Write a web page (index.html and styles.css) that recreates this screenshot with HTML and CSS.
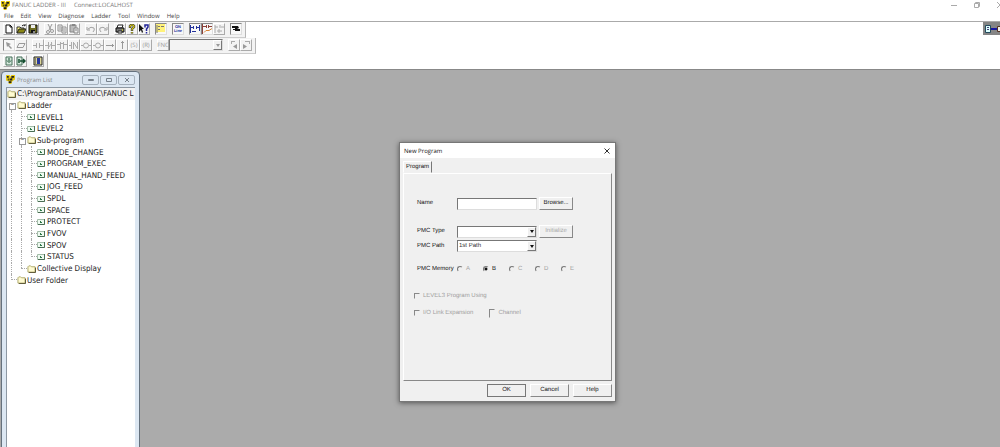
FILE: index.html
```html
<!DOCTYPE html>
<html lang="en">
<head>
<meta charset="utf-8">
<title>FANUC LADDER - III</title>
<link rel="stylesheet" href="styles.css">
</head>
<body>
<svg class="defs" aria-hidden="true">
  <symbol id="logo" viewBox="0 0 10 10"><path d="M0 0h4l1 2 1-2h4v5L7 7 6 10H3V7L0 6z" fill="#e8c80c"/><path d="M1 1h2v2H1zM6 1h3v2H7v3H4V4h2zM3 7h3v2H3zM2 4h1v2H2z" fill="#222"/></symbol>
  <symbol id="folder" viewBox="0 0 10 9"><path d="M1 8V2l1-1h2l1 1h4v6z" fill="#fffbd2" stroke="#a8a260"/><path d="M9.500 3v5.500H2" fill="none" stroke="#4f4b28"/></symbol>
  <symbol id="ladder" viewBox="0 0 9 8"><path d="M.5 1.500h7v5h-7z" fill="#eefaf0" stroke="#a3bda9"/><path d="M3.500 3v2M3 4.500h2" stroke="#2f7849" fill="none"/><path d="M7.500 1v5.500H1" fill="none" stroke="#4b6e55"/></symbol>
  <symbol id="new" viewBox="0 0 10 10"><path d="M2 1h4l2 2v6H2zM6 1v2h2" fill="#fff" stroke="#111"/></symbol>
  <symbol id="open" viewBox="0 0 10 10"><path d="M1 9V3h3l1 1h3v2" fill="#fff780" stroke="#333"/><path d="M1 9l2-4h7L8 9z" fill="#8a8715" stroke="#222"/><path d="M6 2q1-2 3 0V0" fill="none" stroke="#222"/></symbol>
  <symbol id="save" viewBox="0 0 10 10"><path d="M1 1h8v8H1z" fill="#6d6b20" stroke="#111"/><path d="M3 1h4v3H3z" fill="#eee"/><path d="M3 6h4v3H3z" fill="#111"/><path d="M6 7v2" stroke="#fff"/></symbol>
  <symbol id="cut" viewBox="0 0 10 10"><path d="M3 0l3 6M7 0L4 6" fill="none" stroke="#999"/><circle cx="3" cy="8" r="1.500" fill="none" stroke="#999"/><circle cx="7" cy="7" r="1.500" fill="none" stroke="#999"/></symbol>
  <symbol id="copy" viewBox="0 0 10 10"><path d="M1 1h4v6H1zM5 3h4v6H5zM2 3h2M2 5h2M6 5h2M6 7h2" fill="none" stroke="#929292"/></symbol>
  <symbol id="paste" viewBox="0 0 10 10"><path d="M1 1h6v7H1z" fill="#bbb" stroke="#888"/><path d="M3 0h3v2H3z" fill="#888"/><path d="M5 4h4v5H5zM6 6h2" fill="#eee" stroke="#888"/></symbol>
  <symbol id="undo" viewBox="0 0 10 10"><path d="M1 3v3h3M2 5q3-3 6-1 1 2-1 4" fill="none" stroke="#a2a2a2"/></symbol>
  <symbol id="redo" viewBox="0 0 10 10"><path d="M9 3v3H6M8 5Q5 2 2 4q-1 2 1 4" fill="none" stroke="#a2a2a2"/></symbol>
  <symbol id="print" viewBox="0 0 10 10"><path d="M3 1h5L7 4H2z" fill="#fff" stroke="#222"/><path d="M1 4h8v4H1z" fill="#777" stroke="#111"/><path d="M3 7h4v2H3z" fill="#eee" stroke="#222"/><path d="M7 6h1" stroke="#ff0"/></symbol>
  <symbol id="help" viewBox="0 0 10 10"><path d="M3 4V2l1-1h2l1 1v1L5 5v2M5 8v1.500" fill="none" stroke="#333" stroke-width="2.400"/><path d="M3 3.500V2l1-1h2l1 1v1L5 5v1.500M5 8v1.200" fill="none" stroke="#d8cc18" stroke-width="1.200"/></symbol>
  <symbol id="what" viewBox="0 0 10 10"><path d="M0 0v8l2-2 1 3 1-1-1-3h2z" fill="#111"/><path d="M6 3.500V1h3v2L7.500 5v2M7.500 8v1.500" fill="none" stroke="#23269b" stroke-width="1.500"/></symbol>
  <symbol id="tree" viewBox="0 0 10 10"><path d="M0 0h9v8H0z" fill="#fff27a"/><path d="M1 1v8M2 2.500h2M5 2.500h3M2 5.500h2" stroke="#777" fill="none"/></symbol>
  <symbol id="net" viewBox="0 0 10 10"><path d="M.5 1v8M9.500 1v6M0 3.500h3M3.500 2v3M6.500 2v3M7 3.500h3M2 7.500h4" fill="none" stroke="#23329a"/></symbol>
  <symbol id="netred" viewBox="0 0 10 10"><path d="M.5 0v10M1 2.500h3M4.500 1v3M6.500 1v3M7 2.500h3" fill="none" stroke="#8d4038"/><path d="M2 8.500l2-2h3l3-2" stroke="#d88435" fill="none"/></symbol>
  <symbol id="netgray" viewBox="0 0 10 10"><path d="M1 1v8M1 3h3M6 1v3M7 3h3M3 7h5M5 5v4" fill="none" stroke="#aaa"/></symbol>
  <symbol id="hand" viewBox="0 0 10 10"><path d="M1 2h6l1 2-2 1h3v2H4V6H2V5h2V4H1z" fill="#111"/></symbol>
  <symbol id="arrow" viewBox="0 0 10 10"><path d="M2 2l5 2-2 1 3 3-1 1-3-3-1 1z" fill="#999"/></symbol>
  <symbol id="erase" viewBox="0 0 10 10"><path d="M1 7.500l2-4h6l-2 4z" fill="none" stroke="#999"/></symbol>
  <symbol id="a" viewBox="0 0 10 10"><path d="M0 5.500h3M3.500 3v5M6.500 3v5M7 5.500h3" fill="none" stroke="#aaa"/></symbol>
  <symbol id="b" viewBox="0 0 10 10"><path d="M0 5.500h3M3.500 2v7M6.500 2v7M7 5.500h3M3 8l4-5" fill="none" stroke="#aaa"/></symbol>
  <symbol id="c" viewBox="0 0 10 10"><path d="M0 4.500h3M3.500 2v7M6.500 2v7M7 4.500h3M4 3.500h2" fill="none" stroke="#aaa"/></symbol>
  <symbol id="d" viewBox="0 0 10 10"><path d="M0 5.500h2M2.500 2v7M4.500 2v7M5 3l3 5M8.500 2v7" fill="none" stroke="#aaa"/></symbol>
  <symbol id="coil" viewBox="0 0 10 10"><path d="M0 5.500h2M8 5.500h2" stroke="#aaa"/><circle cx="5" cy="5.500" r="2.500" fill="none" stroke="#aaa"/></symbol>
  <symbol id="line" viewBox="0 0 10 10"><path d="M1 5.500h8M7.500 4v3" stroke="#999"/></symbol>
  <symbol id="vert" viewBox="0 0 10 10"><path d="M5.500 1v8M4 2.500h3" stroke="#999"/></symbol>
  <symbol id="prev" viewBox="0 0 10 10"><path d="M8 4v5L4 6.500z" fill="#999"/><path d="M2 1.500h4M2.500 1v3" stroke="#aaa"/></symbol>
  <symbol id="next" viewBox="0 0 10 10"><path d="M2 4v5l4-2.500z" fill="#999"/><path d="M4 1.500h5M8.500 1v3" stroke="#aaa"/></symbol>
  <symbol id="import" viewBox="0 0 10 10"><path d="M2 1h6v8H2z" fill="#d5e8dc" stroke="#456e59"/><path d="M5 2v3M3 4.500l2 2 2-2" fill="none" stroke="#134d2e"/></symbol>
  <symbol id="export" viewBox="0 0 10 10"><path d="M1 1h5v8H1z" fill="#d5e8dc" stroke="#456e59"/><path d="M3 3v4M4 5h4M7 3l2 2-2 2" fill="none" stroke="#134d2e" stroke-width="1.500"/></symbol>
  <symbol id="panel" viewBox="0 0 10 10"><path d="M1 1h8v8H1z" fill="#ddd79a" stroke="#222"/><path d="M4 2h3v6H4z" fill="#28389b"/><path d="M2 3h1M2 5h1M2 7h1" stroke="#333"/></symbol>
</svg>
<div class="app">
  <header class="titlebar">
    <svg class="logo"><use href="#logo"/></svg>
    <span>FANUC LADDER - III</span><span>Connect:LOCALHOST</span>
    <div class="window-controls">
      <button aria-label="Minimize"><svg viewBox="0 0 8 8"><path d="M1 4.500h6"/></svg></button>
      <button aria-label="Restore"><svg viewBox="0 0 8 8"><path d="M1.500 2.500h4v4h-4zM2.500 2.500v-1h4v4h-1"/></svg></button>
      <button aria-label="Close"><svg viewBox="0 0 8 8"><path d="M1 1l6 6M7 1L1 7"/></svg></button>
    </div>
  </header>
  <nav class="menu"><button>File</button><button>Edit</button><button>View</button><button>Diagnose</button><button>Ladder</button><button>Tool</button><button>Window</button><button>Help</button></nav>
  <section class="toolbars">
    <div class="bars">
      <div class="bar">
        <div class="group"><button aria-label="New"><svg><use href="#new"/></svg></button><button aria-label="Open"><svg><use href="#open"/></svg></button><button aria-label="Save"><svg><use href="#save"/></svg></button></div>
        <div class="group"><button aria-label="Cut"><svg><use href="#cut"/></svg></button><button aria-label="Copy"><svg><use href="#copy"/></svg></button><button aria-label="Paste"><svg><use href="#paste"/></svg></button></div>
        <div class="group"><button aria-label="Undo"><svg><use href="#undo"/></svg></button><button aria-label="Redo"><svg><use href="#redo"/></svg></button></div>
        <div class="group"><button aria-label="Print"><svg><use href="#print"/></svg></button><button aria-label="About"><svg><use href="#help"/></svg></button><button aria-label="Context help"><svg><use href="#what"/></svg></button></div>
        <div class="group"><button class="pressed" aria-label="Program list"><svg><use href="#tree"/></svg></button></div>
        <div class="group"><button class="pressed online"><span>ON</span><span>Line</span></button></div>
        <div class="group"><button class="pressed" aria-label="Monitor"><svg><use href="#net"/></svg></button><button class="pressed" aria-label="Edit ladder"><svg><use href="#netred"/></svg></button><button aria-label="Online edit"><svg><use href="#netgray"/></svg></button></div>
        <div class="group"><button class="pressed" aria-label="Run or stop"><svg><use href="#hand"/></svg></button></div>
      </div>
      <div class="bar">
        <div class="group"><button class="pressed" aria-label="Select"><svg><use href="#arrow"/></svg></button><button aria-label="Erase"><svg><use href="#erase"/></svg></button></div>
        <div class="group"><button aria-label="Contact A"><svg><use href="#a"/></svg></button><button aria-label="Contact B"><svg><use href="#b"/></svg></button><button aria-label="Positive contact"><svg><use href="#c"/></svg></button><button aria-label="Negative contact"><svg><use href="#d"/></svg></button><button aria-label="Coil"><svg><use href="#coil"/></svg></button><button aria-label="Inverted coil"><svg><use href="#coil"/></svg></button><button aria-label="Horizontal line"><svg><use href="#line"/></svg></button><button aria-label="Vertical line"><svg><use href="#vert"/></svg></button><button>(S)</button><button>(R)</button></div>
        <div class="group"><button class="fnc">FNC</button><span class="combo function"><select aria-label="Function" disabled><option></option></select><i></i></span></div>
        <div class="group"><button aria-label="Previous"><svg><use href="#prev"/></svg></button><button aria-label="Next"><svg><use href="#next"/></svg></button></div>
      </div>
      <div class="bar">
        <div class="group"><button aria-label="Decompile"><svg><use href="#import"/></svg></button><button aria-label="Compile"><svg><use href="#export"/></svg></button></div>
        <div class="group"><button aria-label="Status"><svg><use href="#panel"/></svg></button></div>
      </div>
    </div>
    <svg class="connection" viewBox="0 0 17 13"><path d="M0 0h17v13H0z" fill="#858585"/><path d="M2.500 3.500h5v7h-5z" fill="#dfffff" stroke="#244b5d"/><path d="M4 5.500h2M4 7.500h2" stroke="#447"/><path d="M8 7h6" stroke="#1717a0" stroke-width="2"/><path d="M14.500 4.500h3v5h-3z" fill="#eee" stroke="#532"/></svg>
  </section>
  <main class="workspace">
    <section class="program-list">
      <header><svg class="logo"><use href="#logo"/></svg><h2>Program List</h2><div><button aria-label="Minimize list"><svg viewBox="0 0 8 6"><path d="M1.500 2.500h5v1h-5z"/></svg></button><button aria-label="Maximize list"><svg viewBox="0 0 8 6"><path d="M1.500 1.500h5v3h-5z"/></svg></button><button aria-label="Close list"><svg viewBox="0 0 8 6"><path d="M2 1l4 4M6 1L2 5"/></svg></button></div></header>
      <div class="tree-pane"><ul class="tree">
        <li class="root"><svg><use href="#folder"/></svg><span>C:\ProgramData\FANUC\FANUC L</span></li>
        <li><i class="node first"></i><svg><use href="#folder"/></svg><span>Ladder</span></li>
        <li><i class="rail"></i><i class="branch"></i><svg><use href="#ladder"/></svg><span>LEVEL1</span></li>
        <li><i class="rail"></i><i class="branch"></i><svg><use href="#ladder"/></svg><span>LEVEL2</span></li>
        <li><i class="rail"></i><i class="node"></i><svg><use href="#folder"/></svg><span>Sub-program</span></li>
        <li><i class="rail"></i><i class="rail"></i><i class="branch"></i><svg><use href="#ladder"/></svg><span>MODE_CHANGE</span></li>
        <li><i class="rail"></i><i class="rail"></i><i class="branch"></i><svg><use href="#ladder"/></svg><span>PROGRAM_EXEC</span></li>
        <li><i class="rail"></i><i class="rail"></i><i class="branch"></i><svg><use href="#ladder"/></svg><span>MANUAL_HAND_FEED</span></li>
        <li><i class="rail"></i><i class="rail"></i><i class="branch"></i><svg><use href="#ladder"/></svg><span>JOG_FEED</span></li>
        <li><i class="rail"></i><i class="rail"></i><i class="branch"></i><svg><use href="#ladder"/></svg><span>SPDL</span></li>
        <li><i class="rail"></i><i class="rail"></i><i class="branch"></i><svg><use href="#ladder"/></svg><span>SPACE</span></li>
        <li><i class="rail"></i><i class="rail"></i><i class="branch"></i><svg><use href="#ladder"/></svg><span>PROTECT</span></li>
        <li><i class="rail"></i><i class="rail"></i><i class="branch"></i><svg><use href="#ladder"/></svg><span>FVOV</span></li>
        <li><i class="rail"></i><i class="rail"></i><i class="branch"></i><svg><use href="#ladder"/></svg><span>SPOV</span></li>
        <li><i class="rail"></i><i class="rail"></i><i class="branch last"></i><svg><use href="#ladder"/></svg><span>STATUS</span></li>
        <li><i class="rail"></i><i class="branch last"></i><svg><use href="#folder"/></svg><span>Collective Display</span></li>
        <li><i class="branch last"></i><svg><use href="#folder"/></svg><span>User Folder</span></li>
      </ul></div>
    </section>
    <form class="dialog" role="dialog" aria-labelledby="dialog-title">
      <header><h1 id="dialog-title">New Program</h1><button type="button" aria-label="Close"><svg viewBox="0 0 8 8"><path d="M1.500 1.500l5 5M6.500 1.500l-5 5"/></svg></button></header>
      <div class="dialog-body">
        <button class="tab" type="button" role="tab">Program</button>
        <div class="panel">
          <div class="row name"><label for="name">Name</label><input id="name" type="text"><button type="button" class="push">Browse...</button></div>
          <div class="row type"><label for="type">PMC Type</label><span class="combo"><select id="type"><option></option></select><i></i></span><button type="button" class="push" disabled>Initialize</button></div>
          <div class="row path"><label for="path">PMC Path</label><span class="combo"><select id="path"><option>1st Path</option></select><i></i></span></div>
          <div class="row memory"><span>PMC Memory</span><div class="radios"><label class="off"><input type="radio" name="memory" disabled>A</label><label><input type="radio" name="memory" checked>B</label><label class="off"><input type="radio" name="memory" disabled>C</label><label class="off"><input type="radio" name="memory" disabled>D</label><label class="off"><input type="radio" name="memory" disabled>E</label></div></div>
          <div class="checks"><label class="off"><input type="checkbox" disabled>LEVEL3 Program Using</label></div>
          <div class="checks"><label class="off"><input type="checkbox" disabled>I/O Link Expansion</label><label class="off channel"><input type="checkbox" disabled>Channel</label></div>
        </div>
        <footer><button type="button" class="push default">OK</button><button type="button" class="push">Cancel</button><button type="button" class="push">Help</button></footer>
      </div>
    </form>
  </main>
</div>
</body>
</html>
```
FILE: styles.css
```css
* { box-sizing: border-box; }
body { margin: 0; background: #fff; color: #333; font: 6px/10px "Open Sans", "Noto Sans", sans-serif; text-rendering: geometricPrecision; }
button, input, select { margin: 0; padding: 0; border: 0; border-radius: 0; background: none; color: inherit; font: inherit; text-rendering: inherit; }
h1, h2 { margin: 0; font: inherit; }
svg { display: block; flex: none; overflow: hidden; }
.defs { position: absolute; width: 0; height: 0; }
.app { display: flex; flex-direction: column; height: 100vh; overflow: hidden; }
.logo { width: 9px; height: 9px; }

.titlebar { display: flex; align-items: center; gap: 8px; height: 10px; padding-left: 1px; color: #777; overflow: hidden; }
.titlebar .logo { margin-right: -6px; }
.window-controls { display: flex; gap: 15px; margin-left: auto; margin-right: -4px; }
.window-controls svg { width: 8px; height: 8px; fill: none; stroke: #aaa; }
.menu { display: flex; gap: 7px; height: 12px; padding-left: 4px; border-bottom: 1px solid #aaa; color: #444; }

.toolbars { display: flex; justify-content: space-between; align-items: flex-start; height: 47px; }
.bars { display: flex; flex-direction: column; align-items: flex-start; }
.bar { display: flex; gap: 5px; height: 16px; padding: 1px 3px 2px; background: #f3f3f3; border-right: 1px solid #b5b5b5; border-bottom: 1px solid #ccc; }
.group { display: flex; }
.group button { display: flex; align-items: center; justify-content: center; width: 12px; height: 12px; border: 1px solid; border-color: #fff #aaa #aaa #fff; color: #999; font-size: 6px; line-height: 6px; }
.group button.pressed { border-color: #888 #ddd #ddd #888; background: #f8f8f8; }
.group svg { width: 10px; height: 10px; }
.group .online { flex-direction: column; color: #24329d; font: bold 4px/4px "Liberation Sans", sans-serif; }
.connection { width: 17px; height: 13px; }

.combo { position: relative; display: flex; width: 80px; height: 12px; background: #fff; border: 1px solid; border-color: #777 #ddd #ddd #777; }
.combo select { appearance: none; width: 100%; padding-left: 1px; color: #333; line-height: 9px; }
.combo i { position: absolute; right: 0; top: 0; display: flex; align-items: center; justify-content: center; width: 9px; height: 10px; background: #f0f0f0; border: 1px solid; border-color: #fff #777 #777 #fff; pointer-events: none; }
.combo i::after { content: ""; border: 2px solid transparent; border-top: 3px solid #111; border-bottom: 0; }
.combo.function { width: 54px; background: #f3f3f3; }
.combo.function i::after { border-top-color: #999; }

.workspace { position: relative; flex: 1; min-height: 0; background: #ababab; border-top: 1px solid #888; overflow: hidden; }
.program-list { position: absolute; left: 1px; top: 1px; bottom: -4px; width: 139px; padding: 0 4px; display: flex; flex-direction: column; background: #dce7f2; border: 1px solid #65717d; border-radius: 4px 4px 0 0; }
.program-list header { display: flex; align-items: center; gap: 2px; height: 15px; color: #888; }
.program-list header div { display: flex; gap: 1px; margin-left: auto; }
.program-list header button { display: grid; place-items: center; width: 17px; height: 10px; border: 1px solid #a5b1bd; border-radius: 2px; }
.program-list header svg:not(.logo) { width: 8px; height: 6px; fill: none; stroke: #77818b; }
.tree-pane { flex: 1; background: #fff; border: 1px solid #8d98a3; border-right: 0; overflow: hidden; }
.tree { display: grid; grid-auto-rows: 1fr; height: 198px; margin: 0; padding: 0; list-style: none; font: 8px/11px "DejaVu Sans Condensed", "Open Sans", sans-serif; }
.tree li { display: flex; align-items: center; min-width: 0; min-height: 0; color: #222; white-space: nowrap; }
.tree svg { width: 9px; height: 8px; margin-right: 1px; }
.root { background: #f1f1f1; }
.rail, .branch, .node { position: relative; flex: none; align-self: stretch; width: 10px; }
.rail::before, .branch::before, .node::before { content: ""; position: absolute; left: 4px; top: 0; bottom: 0; border-left: 1px dotted #aaa; }
.node.first::before { top: 4px; }
.branch::after { content: ""; position: absolute; left: 4px; right: 0; top: 5px; border-top: 1px dotted #aaa; }
.branch.last::before { bottom: 6px; }
.node::after { content: "−"; position: absolute; left: 2px; top: 3px; width: 5px; height: 5px; border: 1px solid #999; background: #fff; font-size: 5px; line-height: 3px; text-align: center; }

.dialog { position: absolute; left: 399px; top: 72px; width: 217px; display: flex; flex-direction: column; background: #f0f0f0; border: 1px solid #777; box-shadow: 0 1px 5px #555; color: #111; font: 6px/9px "Liberation Sans", sans-serif; }
.dialog header { display: flex; align-items: center; justify-content: space-between; height: 15px; padding: 0 4px; background: #fff; font: 6px/10px "Open Sans", sans-serif; }
.dialog header svg { width: 8px; height: 8px; fill: none; stroke: #333; }
.dialog-body { display: flex; flex-direction: column; padding: 3px 3px 4px; }
.tab { align-self: flex-start; width: 29px; height: 12px; border: 1px solid; border-color: #fff #777 transparent #fff; }
.panel { height: 208px; padding: 23px 10px 0; border: 1px solid; border-color: #fff #888 #888 #fff; }
.row { display: grid; grid-template-columns: 38px 80px 34px; column-gap: 2px; align-items: center; padding-left: 3px; }
.name { height: 13px; margin-bottom: 15px; }
.path { height: 12px; margin-top: 2px; margin-bottom: 11px; }
.row input[type="text"] { width: 80px; height: 12px; padding: 1px; background: #fff; border: 1px solid; border-color: #777 #ddd #ddd #777; }
.push { height: 13px; border: 1px solid; border-color: #fff #888 #888 #fff; line-height: 9px; text-align: center; }
.push:disabled { color: #aaa; }
.memory { grid-template-columns: 38px 1fr; height: 12px; margin-bottom: 15px; white-space: nowrap; }
.radios { display: grid; grid-template-columns: repeat(5, 26px); }
.radios label, .checks label { display: flex; align-items: center; gap: 3px; }
.off { color: #a0a0a0; }
.radios input { appearance: none; width: 6px; height: 6px; border: 1px solid; border-color: #777 #eee #eee #777; border-radius: 50%; }
.radios input:checked { background: radial-gradient(circle, #111 1px, #fff 2px); }
.checks { display: flex; gap: 16px; height: 12px; margin-bottom: 5px; }
.checks input { appearance: none; width: 6px; height: 6px; border: 1px solid; border-color: #888 #f0f0f0 #f0f0f0 #888; }
.checks .channel input { height: 9px; }
.dialog footer { display: grid; grid-template-columns: repeat(3, 39px); justify-content: end; gap: 4px; padding-top: 3px; }
.push.default { border-color: #777; }
```
